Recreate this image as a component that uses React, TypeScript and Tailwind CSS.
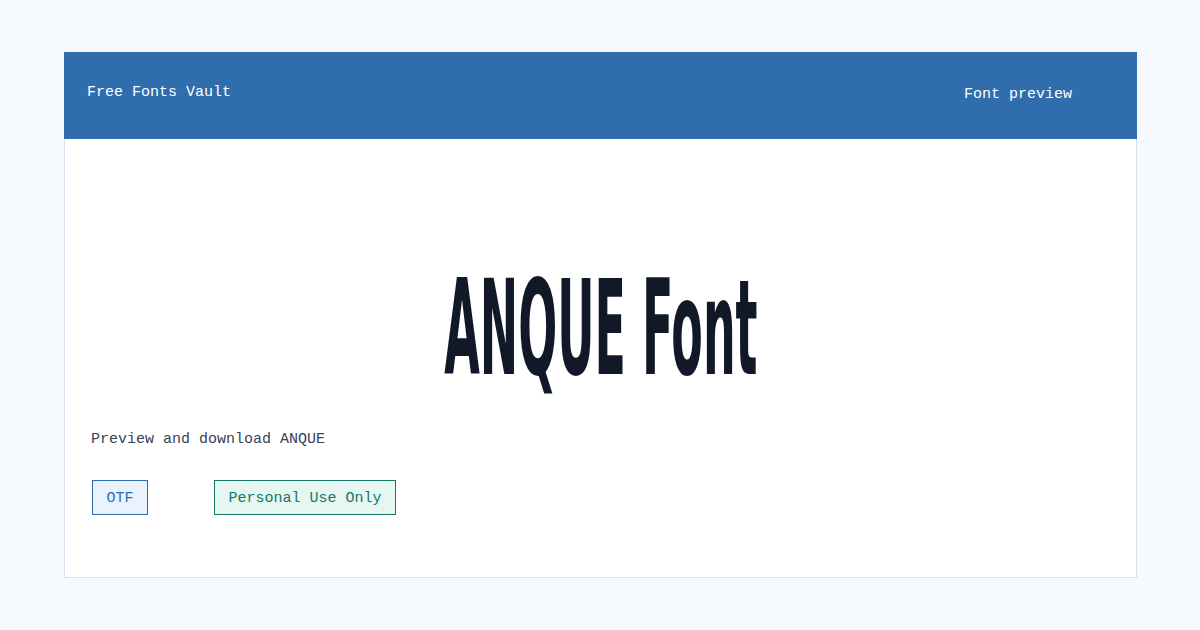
export default function App() {
  const badges = [
    { label: "OTF", cls: "w-[56px] bg-[#eaf2fd] border-[#2f6dad] text-[#2f6dad]" },
    { label: "Personal Use Only", cls: "w-[182px] bg-[#e6f6f1] border-[#13786a] text-[#13786a]" },
  ];

  return (
    <div className="min-h-screen w-full bg-[#f6f9fe] pt-[52px] font-['Liberation_Mono',monospace]">
      <div className="ml-[64px] mr-[63px] flex h-[526px] flex-col">
        {/* header */}
        <div className="flex h-[87px] items-center justify-between bg-[#2f6dad] pl-[23px] pr-[65px] text-[15px] leading-[20px] text-white">
          <span className="mb-[6px]">Free Fonts Vault</span>
          <span className="mb-[2px]">Font preview</span>
        </div>

        {/* body */}
        <div className="flex flex-1 flex-col border-x border-b border-[#d5e1ee] bg-white px-[26px] pt-[118px]">
          <div className="flex h-[142px] justify-center pt-[6px]">
            <h1 className="origin-center scale-x-[0.39] whitespace-nowrap font-['Liberation_Sans_Narrow','DejaVu_Sans_Condensed','Liberation_Sans',sans-serif] text-[131px] font-bold leading-[131px] text-[#111827]">
              ANQUE Font
            </h1>
          </div>

          <p className="mt-[31px] text-[15px] leading-[20px] text-[#37425a]">Preview and download ANQUE</p>

          <div className="mt-[30px] flex gap-[66px] pl-[1px]">
            {badges.map((b) => (
              <span key={b.label} className={`flex h-[35px] items-center justify-center border pt-[4px] text-[15px] ${b.cls}`}>
                {b.label}
              </span>
            ))}
          </div>
        </div>
      </div>
    </div>
  );
}
